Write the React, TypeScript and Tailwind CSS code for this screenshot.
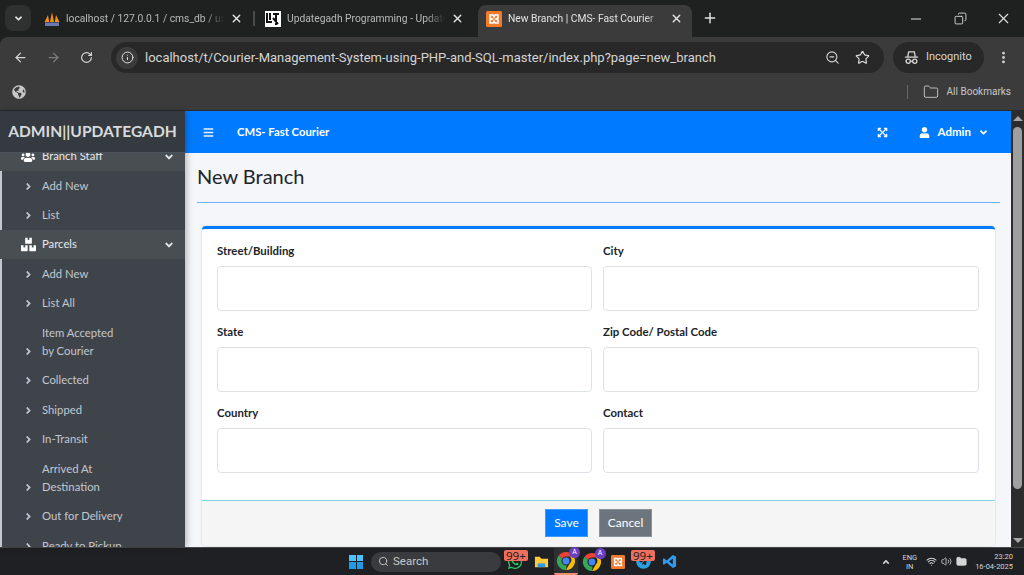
import { ArrowLeft, ArrowRight, Copy, Folder, Info, Minus, MoreVertical, Plus, RotateCw, Search, Star, Volume2, Wifi, X, ZoomOut } from "lucide-react";
import { FaAngleDown, FaAngleRight, FaBars, FaBoxes, FaExpandArrowsAlt, FaGlobeAmericas, FaTelegram, FaUser, FaUsers, FaWhatsapp } from "react-icons/fa";

function PmaIcon() {
  return (
    <svg viewBox="0 0 16 16" className="w-4 h-4 shrink-0">
      <path d="M0.5 11 4 4l1.2 7zM6 11l2-10 2 10zM10.8 11 12 4l3.5 7z" fill="#f29111" />
      <rect x="1" y="11.5" width="14" height="3.5" fill="#6c78af" />
    </svg>
  );
}

function UgIcon() {
  return (
    <div className="w-4 h-4 shrink-0 bg-white flex items-center justify-center">
      <svg viewBox="0 0 16 16" className="w-4 h-4">
        <path d="M2 2v9h5M5 2v7M8 3h6M11 3v11M8 7l5 6" stroke="#111" strokeWidth="2" fill="none" />
      </svg>
    </div>
  );
}

function XamppIcon({ size = 16 }: { size?: number }) {
  return (
    <svg viewBox="0 0 16 16" width={size} height={size} className="shrink-0">
      <rect width="16" height="16" rx="1.5" fill="#f3792b" />
      <path d="M4 4h3l1 2 1-2h3v3l-2 1 2 1v3H9L8 10l-1 2H4V9l2-1-2-1z" fill="none" stroke="#fff" strokeWidth="1.6" />
    </svg>
  );
}

function ChromeIcon() {
  return (
    <div className="relative w-5 h-5">
      <svg viewBox="0 0 20 20" className="w-5 h-5">
        <path d="M10 1a9 9 0 0 1 7.8 4.5H10a4.5 4.5 0 0 0-4 2.4L2.7 4.6A9 9 0 0 1 10 1z" fill="#ea4335" />
        <path d="M17.8 5.5A9 9 0 0 1 10 19l3.9-6.7a4.5 4.5 0 0 0 0-6.8z" fill="#fbbc04" />
        <path d="M10 19A9 9 0 0 1 2.7 4.6L6 7.9a4.5 4.5 0 0 0 4.6 6.5z" fill="#34a853" />
        <circle cx="10" cy="10" r="3.4" fill="#4285f4" />
      </svg>
      <div className="absolute -top-1 -right-1 w-[11px] h-[11px] rounded-full bg-[#6a3fc0] text-white text-[7px] leading-[11px] text-center">A</div>
    </div>
  );
}

function Badge() {
  return (
    <div className="absolute -top-[4px] left-[1px] bg-[#ef6f5e] text-[#222] text-[11.5px] leading-[11px] px-[2px] rounded-[2px] font-['Noto_Sans',sans-serif]">99+</div>
  );
}

function Tab({ icon, title, width, active }: { icon: React.ReactNode; title: string; width: string; active?: boolean }) {
  return (
    <div className={`${width} h-[32px] flex items-center gap-[6px] pl-[8px] pr-[9px] pb-[5px] rounded-t-lg ${active ? "bg-[#3b3b3b] text-[#e3e3e3]" : "text-[#b9b9b9]"}`}>
      {icon}
      <span className="flex-1 overflow-hidden whitespace-nowrap text-[10.3px] [mask-image:linear-gradient(to_right,black_88%,transparent)]">{title}</span>
      <X size={13} strokeWidth={2.5} className="text-[#e3e3e3] shrink-0" />
    </div>
  );
}

function BrowserChrome() {
  return (
    <div className="shrink-0 font-['Roboto',sans-serif]">
      <div className="h-[37px] bg-[#1f2020] flex items-end pl-[5px] relative">
        <div className="w-[26px] h-[26px] rounded-lg bg-[#2f3030] flex items-center justify-center self-start mt-[5px] mr-[5px]">
          <FaAngleDown size={11} className="text-[#e3e3e3]" />
        </div>
        <Tab icon={<PmaIcon />} title="localhost / 127.0.0.1 / cms_db / users" width="w-[216px]" />
        <div className="w-[2px] h-[15px] ml-[1px] mb-[11px] bg-[#4a4a4a]" />
        <div className="w-[2px]" />
        <Tab icon={<UgIcon />} title="Updategadh Programming - Updategadh" width="w-[216px]" />
        <div className="w-[5px]" />
        <Tab icon={<XamppIcon />} title="New Branch | CMS- Fast Courier" width="w-[214px]" active />
        <Plus size={16} strokeWidth={2.2} className="text-[#e3e3e3] ml-[10px] mb-[11px]" />
        <div className="ml-auto flex items-center self-start mt-[10px] text-[#e3e3e3]">
          <Minus size={16} strokeWidth={1.5} className="mr-[30px]" />
          <Copy size={13} strokeWidth={1.6} className="mr-[28px] -scale-x-100" />
          <X size={17} strokeWidth={1.5} className="mr-[12px]" />
        </div>
      </div>
      <div className="h-[37px] bg-[#3b3b3b] flex items-center pl-[13px] pt-[4px] rounded-tl-lg">
        <ArrowLeft size={15} strokeWidth={2} className="text-[#d5d5d5]" />
        <ArrowRight size={15} strokeWidth={2} className="text-[#7d7d7d] ml-[18px]" />
        <RotateCw size={13} strokeWidth={2.2} className="text-[#d5d5d5] ml-[19px]" />
        <div className="w-[773px] h-[31px] ml-[18px] rounded-full bg-[#282828] flex items-center pl-[5px] pr-[14px]">
          <div className="w-[22px] h-[22px] rounded-full bg-[#3b3b3b] flex items-center justify-center">
            <Info size={13} strokeWidth={1.8} className="text-[#e3e3e3]" />
          </div>
          <span className="ml-[7px] text-[13px] text-[#d5d5d5] whitespace-nowrap">localhost/t/Courier-Management-System-using-PHP-and-SQL-master/index.php?page=new_branch</span>
          <ZoomOut size={15} strokeWidth={1.8} className="ml-auto text-[#d5d5d5]" />
          <Star size={15} strokeWidth={1.8} className="ml-[15px] text-[#e3e3e3]" />
        </div>
        <div className="w-[91px] h-[31px] ml-[9px] rounded-full bg-[#282828] flex items-center pl-[11px] gap-[7px]">
          <svg viewBox="0 0 16 16" className="w-[15px] h-[15px] text-[#d5d5d5]" fill="none" stroke="currentColor" strokeWidth="1.4">
            <path d="M4 7l1-5h6l1 5M1 7.5h14" />
            <circle cx="4.5" cy="12" r="2.2" />
            <circle cx="11.5" cy="12" r="2.2" />
            <path d="M6.7 12h2.6" />
          </svg>
          <span className="text-[11px] text-[#d5d5d5]">Incognito</span>
        </div>
        <MoreVertical size={15} strokeWidth={2.5} className="ml-[12px] text-[#d5d5d5]" />
      </div>
      <div className="h-[37px] bg-[#3b3b3b] flex items-center pl-[12px] pb-[1px] border-b border-[#2b2b2b]">
        <FaGlobeAmericas size={14} className="text-[#c7c7c7]" />
        <div className="ml-auto w-[1px] h-[14px] bg-[#666]" />
        <Folder size={16} strokeWidth={1.4} className="ml-[15px] text-[#c7c7c7]" />
        <span className="ml-[8px] mr-[13px] text-[10px] text-[#c7c7c7]">All Bookmarks</span>
      </div>
    </div>
  );
}

function SubItem({ lines }: { lines: string[] }) {
  return (
    <li className="flex items-end pl-[21px] py-[5.75px] text-[11.3px] leading-[18px] text-[#c2c7d0]">
      <FaAngleRight size={11} className="mb-[3px] shrink-0" />
      <span className="ml-[8px]">
        {lines.map(l => (
          <span key={l} className="block">{l}</span>
        ))}
      </span>
    </li>
  );
}

function NavGroup({ icon, label, items }: { icon: React.ReactNode; label: string; items: string[][] }) {
  return (
    <li>
      <div className="h-[29px] bg-[#494e53] flex items-center pl-[20px] pr-[10px] text-[11.3px] text-[#e6e8ec]">
        <span className="w-[16px] flex justify-center">{icon}</span>
        <span className="ml-[6px]">{label}</span>
        <FaAngleDown size={12} className="ml-auto" />
      </div>
      <ul className="border-l-[2px] border-[#c2c7d0]">
        {items.map(i => (
          <SubItem key={i[0]} lines={i} />
        ))}
      </ul>
    </li>
  );
}

function Sidebar() {
  return (
    <aside className="w-[185px] shrink-0 bg-[#3f444b] flex flex-col overflow-hidden shadow-[2px_0_6px_rgba(0,0,0,0.25)] z-10">
      <div className="h-[42px] shrink-0 bg-[#343a40] border-b border-[#4b545c] flex items-center justify-center text-[15.6px] font-bold text-[#d8dadc] relative z-10 whitespace-nowrap">
        ADMIN||UPDATEGADH
      </div>
      <ul className="-mt-[11px]">
        <NavGroup icon={<FaUsers size={14} className="text-white" />} label="Branch Staff" items={[["Add New"], ["List"]]} />
        <NavGroup
          icon={<FaBoxes size={15} className="text-white" />}
          label="Parcels"
          items={[["Add New"], ["List All"], ["Item Accepted", "by Courier"], ["Collected"], ["Shipped"], ["In-Transit"], ["Arrived At", "Destination"], ["Out for Delivery"], ["Ready to Pickup"]]}
        />
      </ul>
    </aside>
  );
}

function Field({ label }: { label: string }) {
  return (
    <div>
      <label className="block text-[11.4px] leading-[18px] font-bold text-[#212529] mb-[6px]">{label}</label>
      <input className="block w-full h-[45px] bg-white border border-[#dee2e6] rounded-[4px]" />
    </div>
  );
}

function Main() {
  return (
    <div className="flex-1 min-w-0 flex flex-col">
      <div className="h-[42px] shrink-0 bg-[#007bff] flex items-center pl-[18px] text-white">
        <FaBars size={11} className="text-[#e8f2ff]" />
        <span className="ml-[23px] text-[11.3px] font-bold">CMS- Fast Courier</span>
        <FaExpandArrowsAlt size={11} className="ml-auto" />
        <FaUser size={11} className="ml-[31px]" />
        <span className="ml-[8px] text-[11.5px] font-bold">Admin</span>
        <FaAngleDown size={11} className="ml-[7px] mr-[22px]" />
      </div>
      <div className="flex-1 min-h-0 bg-[#f4f6f9] pl-[12px] pr-[11px] overflow-hidden">
        <h1 className="pt-[7px] text-[20px] leading-[32px] text-[#212529]">New Branch</h1>
        <div className="mt-[10px] h-[1px] bg-[#6cb1fb]" />
        <div className="mt-[23px] ml-[5px] mr-[5px] bg-white rounded-[4px] border-t-[3px] border-[#007bff] shadow-[0_0_2px_rgba(0,0,0,0.2)]">
          <div className="grid grid-cols-[375px_376px] gap-x-[11px] gap-y-[12px] pl-[15px] pr-[16px] pt-[13px] pb-[27px]">
            <Field label="Street/Building" />
            <Field label="City" />
            <Field label="State" />
            <Field label="Zip Code/ Postal Code" />
            <Field label="Country" />
            <Field label="Contact" />
          </div>
          <div className="h-[1px] bg-[#7fd3e2]" />
          <div className="h-[45px] pb-[1px] bg-[#f5f5f5] flex items-center justify-center gap-[11px] rounded-b-[4px]">
            <button className="w-[43px] h-[28px] bg-[#007bff] border border-[#3d9aff] text-white text-[12px]">Save</button>
            <button className="w-[53px] h-[28px] bg-[#6c757d] border border-[#8a9299] text-white text-[12px]">Cancel</button>
          </div>
        </div>
      </div>
    </div>
  );
}

function Scrollbar() {
  return (
    <div className="w-[13px] shrink-0 bg-[#2c2c2c] flex flex-col items-center pt-[5px] pb-[4px]">
      <div className="w-0 h-0 border-x-[5px] border-x-transparent border-b-[5px] border-b-[#a5a5a5]" />
      <div className="mt-[6px] w-[9px] h-[362px] rounded-full bg-[#9f9f9f]" />
      <div className="mt-auto w-0 h-0 border-x-[5px] border-x-transparent border-t-[5px] border-t-[#a5a5a5]" />
    </div>
  );
}

function Taskbar() {
  return (
    <div className="h-[28px] shrink-0 bg-[#1f2023] border-t border-[#4a4a4a] flex items-center relative font-['Roboto',sans-serif]">
      <div className="ml-[349px] grid grid-cols-2 gap-[1px] w-[14px] h-[14px]">
        <div className="bg-[#4cc2ff]" />
        <div className="bg-[#4cc2ff]" />
        <div className="bg-[#1e9be8]" />
        <div className="bg-[#1e9be8]" />
      </div>
      <div className="ml-[8px] w-[130px] h-[20px] rounded-full bg-[#3a3b3e] flex items-center pl-[7px] gap-[4px] text-[#c9c9c9]">
        <Search size={11} strokeWidth={2} />
        <span className="text-[11.5px]">Search</span>
      </div>
      <div className="ml-[2px] w-[24px] flex justify-center relative">
        <FaWhatsapp size={16} className="text-[#25d366]" />
        <Badge />
      </div>
      <div className="w-[26px] ml-[1px] flex justify-center">
        <svg viewBox="0 0 16 16" className="w-[15px] h-[15px]">
          <path d="M1 3h5l2 2h7v9H1z" fill="#ffc83d" />
          <rect x="4" y="10" width="8" height="4" fill="#2f9be0" />
        </svg>
      </div>
      <div className="w-[24px] h-[27px] bg-[#2e2f33] flex items-center justify-center border-b-2 border-[#ef8f6e] rounded-[2px]">
        <ChromeIcon />
      </div>
      <div className="w-[27px] flex justify-center"><ChromeIcon /></div>
      <div className="w-[25px] flex justify-center"><XamppIcon size={14} /></div>
      <div className="w-[27px] flex justify-center relative">
        <FaTelegram size={15} className="text-[#2aa1e0]" />
        <Badge />
      </div>
      <div className="w-[25px] flex justify-center">
        <svg viewBox="0 0 16 16" className="w-[15px] h-[15px]">
          <path d="M11.5 1 15 2.7v10.6L11.5 15 5 9.2l-3 2.3-1-.8V5.3l1-.8 3 2.3zM11.5 4.8 7.6 8l3.9 3.2z" fill="#2f9bed" />
        </svg>
      </div>
      <div className="ml-auto flex items-center text-[#d5d5d5] mr-[11px]">
        <FaAngleDown size={10} className="rotate-180 mr-[11px]" />
        <div className="text-[7.5px] leading-[9px] text-center mr-[9px]">ENG<br />IN</div>
        <Wifi size={11} strokeWidth={2.2} className="mr-[4px]" />
        <Volume2 size={11} strokeWidth={1.8} className="mr-[4px]" />
        <Folder size={11} fill="currentColor" className="mr-[8px]" />
        <div className="text-[7.5px] leading-[10px] text-right">23:20<br />16-04-2025</div>
      </div>
    </div>
  );
}

export default function App() {
  return (
    <div className="w-[1024px] h-[575px] overflow-hidden flex flex-col bg-[#1f2020]">
      <BrowserChrome />
      <div className="flex-1 min-h-0 flex font-['Lato',sans-serif]">
        <Sidebar />
        <Main />
        <Scrollbar />
      </div>
      <Taskbar />
    </div>
  );
}
